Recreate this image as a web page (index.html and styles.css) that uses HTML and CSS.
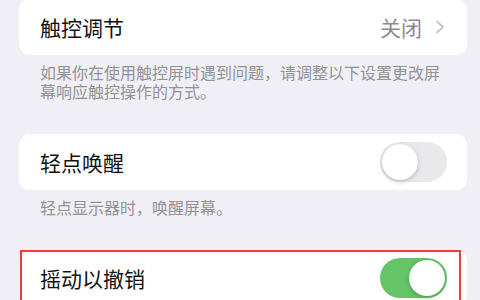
FILE: index.html
```html
<!DOCTYPE html>
<html lang="zh-CN">
<head>
<meta charset="utf-8">
<link rel="stylesheet" href="styles.css">
</head>
<body>
<div class="page">
  <section class="group">
    <div class="card">
      <div class="row">
        <span class="label">触控调节</span>
        <span class="value">关闭</span>
        <svg class="chevron" width="10" height="14" viewBox="0 0 10 14"><polyline points="2,1.5 8,7 2,12.5" fill="none" stroke="#c4c4c7" stroke-width="1.8" stroke-linecap="round" stroke-linejoin="round"/></svg>
      </div>
    </div>
    <p class="footer">如果你在使用触控屏时遇到问题，请调整以下设置更改屏幕响应触控操作的方式。</p>
  </section>
  <section class="group">
    <div class="card">
      <div class="row">
        <span class="label">轻点唤醒</span>
        <span class="toggle"><span class="knob"></span></span>
      </div>
    </div>
    <p class="footer">轻点显示器时，唤醒屏幕。</p>
  </section>
  <section class="group">
    <div class="card highlighted">
      <div class="row">
        <span class="label">摇动以撤销</span>
        <span class="toggle on"><span class="knob"></span></span>
      </div>
      <div class="mark"></div>
    </div>
  </section>
</div>
</body>
</html>
```

FILE: styles.css
```css
html, body {
  margin: 0;
  padding: 0;
  background: #f0eff5;
  font-family: "Noto Sans CJK SC", "Noto Sans", sans-serif;
  overflow: hidden;
}
.page {
  margin-top: -1px;
  padding: 0 13px 0 19px;
}
.group {
  margin-bottom: 33px;
}
.card {
  position: relative;
  background: #ffffff;
  border-radius: 11px;
}
.row {
  display: flex;
  align-items: center;
  height: 56px;
  padding: 0 20px 0 21px;
}
.label {
  flex: 1;
  font-size: 21px;
  color: #111;
  line-height: 1;
}
.value {
  font-size: 21px;
  color: #8a8a8e;
  line-height: 1;
  margin-right: 13px;
}
.chevron {
  display: block;
  margin-right: 2px;
}
.footer {
  margin: 0;
  padding: 8px 22px 0 21px;
  font-size: 16px;
  line-height: 19px;
  color: #929296;
}
.toggle {
  position: relative;
  width: 67px;
  height: 40px;
  border-radius: 20px;
  background: #e9e9eb;
  flex: none;
}
.toggle .knob {
  position: absolute;
  top: 2px;
  left: 2px;
  width: 36px;
  height: 36px;
  border-radius: 50%;
  background: #ffffff;
  box-shadow: 0 2px 5px rgba(0,0,0,0.18), 0 0 1px rgba(0,0,0,0.15);
}
.toggle.on {
  background: #65c466;
}
.toggle.on .knob {
  left: 29px;
}
.mark {
  position: absolute;
  left: 1px;
  top: 0;
  width: 441px;
  bottom: 0;
  border: 2px solid #f5383a;
  box-sizing: border-box;
}
```
